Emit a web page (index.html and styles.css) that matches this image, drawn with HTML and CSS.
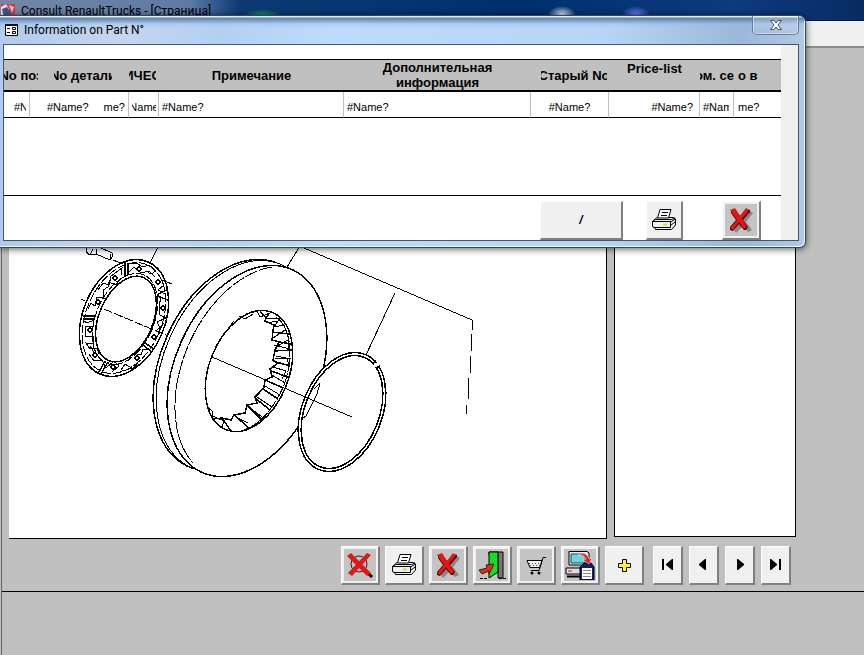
FILE: index.html
```html
<!DOCTYPE html>
<html lang="ru">
<head>
    <meta charset="UTF-8">
    <meta name="viewport" content="width=device-width, initial-scale=1.0">
    <title>Consult RenaultTrucks - [Страница]</title>
    <link rel="stylesheet" href="styles.css">
</head>
<body>

    <!-- Shared icons -->
    <svg class="sprite" aria-hidden="true">
        <symbol id="icon-printer" viewBox="0 0 26 24">
            <path d="M9 1.5H20L17.500 10H6.500Z" fill="#fff" stroke="#000"/>
            <path d="M11 4.500H17M10 7.500H16" stroke="#000"/>
            <path d="M1.500 13.500L6 9.500M18 9.500H22.500L24.500 11V17L20.500 21.500H4.500L3.500 19.500L1.500 18.500V13.500L4.500 11.500H20.500L24 10M1.500 13.500H19.500V19.500H2.500M19.500 14L24.500 11M5 21.500H20M19.500 17.500L24 14" fill="none" stroke="#000"/>
            <path d="M12 16.500H16" stroke="#d8d820" stroke-width="2"/>
        </symbol>
        <symbol id="icon-cross" viewBox="0 0 26 26">
            <path d="M6 4L12 11L20 3L23 5L16 14L22 22L18 24L13 18L6 25L4 22L9 14L4 7Z" fill="#888" transform="translate(2 1)"/>
            <path d="M3 4L7 2L12 9L19 2L22 3V5L15 13L20 20L18 23H16L11 17L5 24L2 23V20L8 13L3 6Z" fill="#500"/>
            <path d="M2 3L7 1L12 9L18 1L21 3L14 12L19 20L16 22L11 15L5 23L2 21L9 13Z" fill="#e01818"/>
        </symbol>
    </svg>

    <div class="app">
        <header class="app-title">
            <svg class="app-icon" viewBox="0 0 14 14" aria-hidden="true">
                <path d="M0 0H14V14H0Z" fill="#d33a50"/>
                <path d="M0 3L5 0L8 5L5 14H0Z" fill="#f1dfe8"/>
                <path d="M1 5L6 3L10 8L9 14H3Z" fill="#455789"/>
                <path d="M8 1L13 3L11 9Z" fill="#f0b7bd"/>
            </svg>
            <span class="app-name">Consult RenaultTrucks - [Страница]</span>
        </header>
        <div class="menu-strip"></div>

        <main class="workspace">
            <section class="panes">
                <div class="pane drawing-pane">
                    <svg class="drawing" viewBox="9 48 597 490" role="img" aria-label="Brake disc">
                        <!-- Bolt -->
                        <g class="line">
                            <path d="M87 247L86 252L90 255L96 254L110 260L113 256L112 253L99 247M96 254L97 249M90 255L93 249M110 260L111 254"/>
                        </g>

                        <!-- Hub ring -->
                        <g class="line bold">
                            <ellipse rx="41" ry="61" transform="translate(124 318) rotate(23)"/>
                            <ellipse rx="27" ry="45" transform="translate(126 319) rotate(23)"/>
                        </g>
                        <g class="line">
                            <ellipse class="dash" rx="38" ry="58" transform="translate(124 318) rotate(23)"/>
                            <ellipse class="dash" rx="29" ry="48" transform="translate(125 319) rotate(23)"/>
                            <path d="M88 309L91 303L95 306L97 297L104 298L103 290L108 287L109 282L116 285L120 279"/>
                            <path d="M98 290L103 283L109 285L111 276L122 268L121 275M129 272L134 267L141 273L149 271L155 277"/>
                            <path d="M129 264L136 263L143 267L149 265L156 271L151 274L146 271M160 277L164 285L158 290L165 294"/>
                            <path d="M157 294L161 299L159 304L160 315L166 318L157 322L160 328L155 331M164 323L159 329L160 334"/>
                            <path d="M84 321L87 323L94 320L93 327L86 326L85 336L94 337L93 344L86 343L90 349L97 348L99 354"/>
                            <path d="M89 354L94 361L102 360L106 368L114 361L119 366L112 372M121 370L125 364L133 369L138 363"/>
                            <path d="M128 361L133 353L141 355L143 349L149 350M122 371L133 368L140 360M90 346L95 354"/>
                        </g>
                        <g class="line bold">
                            <path d="M125 261V277M128 263V275M83 316H96M83 319H94M99 372L105 361M101 374L108 362M143 345L152 352M145 343L154 349M158 294L167 290M160 297L168 300"/>
                            <circle cx="98" cy="302" r="2"/>
                            <circle cx="115" cy="278" r="2"/>
                            <circle cx="139" cy="269" r="2"/>
                            <circle cx="158" cy="282" r="2"/>
                            <circle cx="163" cy="308" r="2"/>
                            <circle cx="154" cy="337" r="2"/>
                            <circle cx="137" cy="358" r="2"/>
                            <circle cx="113" cy="367" r="2"/>
                            <circle cx="95" cy="355" r="2"/>
                            <circle cx="90" cy="330" r="2"/>
                        </g>

                        <!-- Disc -->
                        <g class="line solid">
                            <ellipse class="thick" rx="72" ry="111" transform="translate(233 365) rotate(24)"/>
                            <ellipse rx="72" ry="111" transform="translate(236 366) rotate(24)"/>
                            <ellipse class="thick" rx="72" ry="111" transform="translate(247 371) rotate(24)"/>
                            <ellipse class="thick" rx="40" ry="63" transform="translate(249 371) rotate(21)"/>
                        </g>
                        <g class="line">
                            <path class="dash-fine" d="M272 267A72 112 24 0 0 193 463"/>
                            <path class="dash-fine" d="M276 317C295 330 294 372 277 399C268 415 256 426 244 430"/>
                        </g>
                        <g class="line bold">
                            <path d="M260 312L266 317L265 321L274 325L273 331L272 340L279 342L275 350L273 360L278 363L270 369L272 377L265 380L264 387L259 393L255 397L257 403L247 405L245 413L234 415L231 420L222 418L213 419"/>
                            <path d="M272 332L289 334M279 342L292 344M274 351L292 350M273 361L290 366M271 371L288 377M265 380L283 388M263 389L278 399M255 398L270 410M247 405L261 419M234 415L248 427M222 418L231 431"/>
                        </g>
                        <g class="line">
                            <path d="M250 313L257 311L260 317L270 313L266 318L280 318M266 323L278 321L274 327L285 325M273 338L285 330M276 347L288 340L289 350M275 358L287 358L289 366M273 367L286 371L282 379"/>
                            <path d="M274 345L290 349M276 356L291 359M272 375L285 383M265 386L280 395M257 397L272 407M249 407L262 417M236 417L248 423M239 316L245 319L253 314M230 326L234 321M207 407L212 411L213 420M210 415L224 421L222 427"/>
                        </g>

                        <!-- Retaining ring -->
                        <g class="line solid">
                            <ellipse class="thick" rx="40" ry="62" transform="translate(342 412) rotate(22)"/>
                            <ellipse class="thick" rx="37" ry="59" transform="translate(342 412) rotate(22)"/>
                        </g>
                        <path class="gap" d="M373 367L382 362"/>
                        <g class="line">
                            <path d="M320 383L317 394L306 416L303 418M320 383L314 389"/>
                            <path class="bold" d="M373 363L376 361M376 368L380 366"/>
                        </g>

                        <!-- Leader and centre lines -->
                        <g class="line">
                            <path d="M158 247L150 263M81 299L85 301M162 280L172 284M113 260L123 264"/>
                            <path class="dash" d="M104 309L168 336"/>
                            <path d="M212 357L352 417M300 246L287 267M290 242L472 320M395 293L366 355"/>
                            <path d="M472 320V330M472 334L471 351M471 356L470 373M469 378L468 400M467 405L466 414"/>
                        </g>
                    </svg>
                </div>
                <div class="pane list-pane"></div>
            </section>

            <nav class="toolbar" aria-label="Page tools">
                <button class="tool gray" type="button" aria-label="Clear search">
                    <svg class="icon" viewBox="0 0 26 26">
                        <circle cx="12" cy="12" r="8" fill="none" stroke="#222"/>
                        <path d="M18 18L25 25" stroke="#000" stroke-width="3"/>
                        <path d="M0 4L4 1L24 21L20 24ZM20 1L24 3L5 24L1 21Z" fill="#e01818"/>
                    </svg>
                </button>
                <button class="tool" type="button" aria-label="Print page"><svg class="icon"><use href="#icon-printer"/></svg></button>
                <button class="tool gray" type="button" aria-label="Cancel"><svg class="icon"><use href="#icon-cross"/></svg></button>
                <button class="tool gray" type="button" aria-label="Exit">
                    <svg class="icon icon-large" viewBox="0 0 30 30">
                        <path d="M12 2H26V28H21V5H12Z" fill="#777" stroke="#000"/>
                        <path d="M12 2H21V22L12 28Z" fill="#10e020" stroke="#000"/>
                        <path d="M2 20L5 24L12 21V24L17 14L9 15L10 18Z" fill="#c83818" stroke="#601000"/>
                        <path d="M3 28.500H11M22 28.500H29" stroke="#000" stroke-dasharray="3 1"/>
                    </svg>
                </button>
                <button class="tool gray" type="button" aria-label="Cart">
                    <svg class="icon" viewBox="0 0 26 26">
                        <path d="M4 8.500H19L17 15.500H7Z" fill="#eee" stroke="#000"/>
                        <path d="M6 11.500H17M7 13.500H17" stroke="#444" stroke-dasharray="1 2"/>
                        <path d="M23 5.500H20L16 18.500H8" fill="none" stroke="#000"/>
                        <circle cx="9" cy="21" r="1.500"/>
                        <circle cx="16" cy="21" r="1.500"/>
                    </svg>
                </button>
                <button class="tool gray" type="button" aria-label="Copy to list">
                    <svg class="icon icon-large" viewBox="0 0 30 30">
                        <path d="M4 1.500H22L24 3V15H4Z" fill="#eee" stroke="#000"/>
                        <path d="M6 4H20V13H6Z" fill="#68d8dc" stroke="#246"/>
                        <path d="M1 18H22V24H1Z" fill="#ddd" stroke="#000"/>
                        <path d="M2 26.500H15" stroke="#000" stroke-width="2"/>
                        <path d="M3 21H7" stroke="#c22"/>
                        <path d="M15 30V17L19 13H26L29 17V30Z" fill="#102070" stroke="#000"/>
                        <path d="M17 18H27V29H17Z" fill="#fff"/>
                        <path d="M18 20.500H26M18 23.500H26M18 26.500H26" stroke="#888"/>
                        <path d="M13 5C18 2 23 4 24 9L27 8L24 14L18 10L21 9C20 6 17 5 13 5Z" fill="#e02020" stroke="#fff" stroke-width=".5"/>
                    </svg>
                </button>
                <button class="tool" type="button" aria-label="Add">
                    <svg class="icon" viewBox="0 0 26 26"><path d="M11.500 7.500H15.500V11.500H19.500V15.500H15.500V19.500H11.500V15.500H7.500V11.500H11.500Z" fill="#fff22d" stroke="#000"/></svg>
                </button>
                <div class="record-nav">
                    <button class="tool nav" type="button" aria-label="First"><svg class="icon-nav" viewBox="0 0 14 14"><path d="M1 1H3V12H1ZM12 1V12H11L5 7V6L11 1Z"/></svg></button>
                    <button class="tool nav" type="button" aria-label="Previous"><svg class="icon-nav" viewBox="0 0 14 14"><path d="M9 1V12H8L2 7V6L8 1Z"/></svg></button>
                    <button class="tool nav" type="button" aria-label="Next"><svg class="icon-nav" viewBox="0 0 14 14"><path d="M4 1H5L11 6V7L5 12H4Z"/></svg></button>
                    <button class="tool nav" type="button" aria-label="Last"><svg class="icon-nav" viewBox="0 0 14 14"><path d="M1 1H2L8 6V7L2 12H1ZM10 1H12V12H10Z"/></svg></button>
                </div>
            </nav>
        </main>
    </div>

    <!-- Part information window -->
    <div class="dialog" role="dialog" aria-labelledby="dialog-title">
        <header class="dialog-title">
            <svg class="form-icon" viewBox="0 0 13 12" aria-hidden="true">
                <path d="M.5.5H12.500V11.500H.5Z" fill="#fff" stroke="#000"/>
                <path d="M0 1H13" stroke="#112" stroke-width="2"/>
                <path d="M2 4.500H5M2 8.500H5" stroke="#000"/>
                <path d="M7.500 3.500H10.500V5.500H7.500ZM7.500 7.500H10.500V9.500H7.500Z" fill="none" stroke="#000"/>
            </svg>
            <span class="dialog-name" id="dialog-title">Information on Part N°</span>
            <button class="close" type="button" aria-label="Close">
                <svg class="icon-close" viewBox="0 0 12 10"><path d="M.5.5H4L6 3L8 .5H11.500L8 5L11.500 9.500H8L6 7L4 9.500H.5L4 5Z" fill="#fff" stroke="#4c5468"/></svg>
            </button>
        </header>
        <div class="dialog-body">
            <div class="form">
                <table class="parts">
                    <colgroup>
                        <col class="c-pos"><col class="c-part"><col class="c-qty"><col class="c-note"><col>
                        <col class="c-old"><col class="c-price"><col class="c-ser"><col class="c-in">
                    </colgroup>
                    <thead>
                        <tr>
                            <th><span class="clip h-pos">No поз</span></th>
                            <th><span class="clip h-part">No детали</span></th>
                            <th><span class="clip h-qty">ИЧЕС</span></th>
                            <th>Примечание</th>
                            <th>Дополнительная информация</th>
                            <th><span class="clip h-old">Старый No</span></th>
                            <th class="top">Price-list</th>
                            <th><span class="clip end h-ser">ом. се</span></th>
                            <th class="left">о в</th>
                        </tr>
                    </thead>
                    <tbody>
                        <tr>
                            <td><span class="clip start d-pos">#N</span></td>
                            <td><div class="pair"><span>#Name?</span><span>me?</span></div></td>
                            <td><span class="clip d-qty">Name</span></td>
                            <td>#Name?</td>
                            <td>#Name?</td>
                            <td class="center">#Name?</td>
                            <td class="right">#Name?</td>
                            <td><span class="clip start d-ser">#Nam</span></td>
                            <td class="indent">me?</td>
                        </tr>
                    </tbody>
                </table>
                <footer class="form-footer">
                    <button class="tool slash" type="button">/</button>
                    <button class="tool print" type="button" aria-label="Print"><svg class="icon"><use href="#icon-printer"/></svg></button>
                    <button class="tool gray" type="button" aria-label="Close form"><svg class="icon"><use href="#icon-cross"/></svg></button>
                </footer>
            </div>
        </div>
    </div>

</body>
</html>
```
FILE: styles.css
```css
* {
    margin: 0;
    padding: 0;
    box-sizing: border-box;
}

body {
    font-family: "Liberation Sans", Arial, sans-serif;
    background: #c0c0c0;
    color: #000;
    overflow: hidden;
}

.sprite {
    position: absolute;
    width: 0;
    height: 0;
}

/* Main window */
.app {
    display: flex;
    flex-direction: column;
    min-height: 100vh;
}

.app-title {
    display: flex;
    align-items: center;
    gap: 6px;
    height: 21px;
    padding: 1px 0 0 1px;
    border-bottom: 1px solid #001b3c;
    background:
        radial-gradient(ellipse 20px 7px at 263px 16px, #1f9c55, transparent),
        radial-gradient(ellipse 14px 9px at 562px 15px, #e5ecf0, transparent),
        radial-gradient(ellipse 14px 8px at 636px 14px, #6a74ee, transparent),
        linear-gradient(90deg, #7387a5 0, #5d7ba5 190px, #0c3a73 240px, #00306b 60%, #0d3a80 85%, #062c62 100%);
}

.app-icon {
    width: 14px;
    height: 14px;
}

.app-name,
.dialog-name {
    font-family: Roboto, "Noto Sans", sans-serif;
    font-size: 12px;
    line-height: 16px;
    white-space: nowrap;
}

.menu-strip {
    height: 27px;
    background: #f0f0f0;
    border-bottom: 2px solid #8c8c8c;
}

.workspace {
    flex: 1;
    border-left: 1px solid #666;
    margin-left: 1px;
}

.panes {
    display: flex;
    gap: 7px;
    padding: 0 68px 0 7px;
}

.pane {
    background: #fff;
    border-right: 1px solid #000;
    border-bottom: 1px solid #000;
}

.drawing-pane {
    flex: 1;
    overflow: hidden;
}

.list-pane {
    width: 182px;
    margin-bottom: 2px;
    border-left: 1px solid #000;
}

.drawing {
    display: block;
    width: 597px;
    height: 490px;
    shape-rendering: crispEdges;
}

.line {
    fill: none;
    stroke: #000;
    stroke-width: 1;
}

.solid {
    fill: #fff;
}

.bold,
.thick {
    stroke-width: 1.5;
}

.dash {
    stroke-dasharray: 9 2;
}

.dash-fine {
    stroke-dasharray: 14 1;
}

.gap {
    stroke: #fff;
    stroke-width: 3;
}

/* Buttons */
.toolbar {
    display: flex;
    justify-content: flex-end;
    gap: 5px;
    padding: 7px 73px 6px 7px;
    border-bottom: 1px solid #000;
}

.record-nav {
    display: flex;
    gap: 6px;
    margin-left: 4px;
}

.tool {
    display: flex;
    justify-content: center;
    align-items: center;
    width: 39px;
    height: 39px;
    background: #f0f0f0;
    border: 1px solid #fff;
    border-right: 2px solid #808080;
    border-bottom: 2px solid #808080;
    font: italic bold 12px "Liberation Sans", Arial, sans-serif;
}

.gray {
    background: #c4c4c4;
    box-shadow: inset 0 0 0 2px #f0f0f0;
}

.nav {
    width: 30px;
}

.icon {
    width: 26px;
    height: 26px;
}

.icon-large {
    width: 30px;
    height: 30px;
}

.icon-nav {
    width: 14px;
    height: 14px;
}

/* Dialog window */
.dialog {
    position: absolute;
    top: 15px;
    left: 0;
    right: 58px;
    padding: 0 6px 6px 3px;
    border: 1px solid #35455f;
    border-left: 0;
    border-radius: 0 7px 6px 0;
    background:
        linear-gradient(180deg, #dfeefa 0, #dfeefa 1px, rgba(70, 105, 155, .8) 2px, rgba(150, 185, 225, .4) 8px, transparent 12px),
        linear-gradient(90deg, #b0cbed 0, #c4d6ee 120px, #b3d0f3 220px, #bedbfb 330px, #b8d5f8 75%, #9bb7da 92%, #b3c9e5 100%);
    box-shadow: 0 1px 7px rgba(0, 0, 0, .65), inset -1px -1px 0 #e5f7ff;
}

.dialog-title {
    display: flex;
    align-items: center;
    gap: 6px;
    height: 28px;
    padding-left: 2px;
}

.form-icon {
    width: 13px;
    height: 12px;
}

.close {
    display: flex;
    align-self: flex-start;
    justify-content: center;
    align-items: center;
    width: 47px;
    height: 19px;
    margin-left: auto;
    background: linear-gradient(rgba(255, 255, 255, .3), transparent);
    border: 1px solid #6b7d99;
    border-top: 0;
    border-radius: 0 0 5px 5px;
    box-shadow: inset 0 0 0 1px rgba(255, 255, 255, .4);
}

.icon-close {
    width: 12px;
    height: 10px;
}

.dialog-body {
    padding-right: 17px;
    border: 1px solid #46556f;
    background: #f0f0f0;
}

.form {
    padding-top: 14px;
    background: #fff;
}

/* Parts table */
.parts {
    width: 100%;
    table-layout: fixed;
    border-collapse: separate;
    border-spacing: 0;
}

.c-pos { width: 26px; }
.c-part { width: 99px; }
.c-qty { width: 30px; }
.c-note { width: 185px; }
.c-old { width: 78px; }
.c-price { width: 91px; }
.c-ser { width: 34px; }
.c-in { width: 47px; }

.parts th {
    height: 33px;
    background: #c0c0c0;
    border-top: 1px solid #000;
    border-bottom: 2px solid #000;
    font-size: 13px;
    line-height: 15px;
    vertical-align: middle;
}

.parts .top {
    vertical-align: top;
    padding-top: 1px;
}

.parts .left {
    padding-left: 4px;
    text-align: left;
}

.parts td {
    height: 26px;
    padding: 4px 3px 0;
    border-right: 1px solid #c0c0c0;
    border-bottom: 1px solid #000;
    font-size: 11px;
    line-height: 14px;
    white-space: nowrap;
}

.parts td:last-child {
    border-right: 0;
}

.parts .center {
    text-align: center;
}

.parts .right {
    padding-right: 6px;
    text-align: right;
}

.parts .indent {
    padding-left: 4px;
}

/* Labels wider than their field are cut off at its edges */
.clip {
    display: flex;
    justify-content: center;
    overflow: hidden;
    white-space: nowrap;
}

.start {
    justify-content: flex-start;
}

.end {
    justify-content: flex-end;
}

.h-pos { width: 34px; }
.h-part { width: 58px; margin-left: 24px; }
.h-qty { width: 27px; }
.h-old { width: 66px; margin-left: 10px; }
.h-ser { width: 34px; }

.d-pos { width: 12px; margin-left: 7px; }
.d-qty { width: 24px; }
.d-ser { width: 26px; }

.pair {
    display: flex;
    justify-content: space-between;
    padding-left: 14px;
}

.form-footer {
    display: flex;
    justify-content: flex-end;
    margin-top: 77px;
    padding: 5px 20px 0 0;
    border-top: 1px solid #000;
}

.slash {
    width: 83px;
    margin-right: 23px;
}

.print {
    width: 37px;
    margin-right: 39px;
}
```
